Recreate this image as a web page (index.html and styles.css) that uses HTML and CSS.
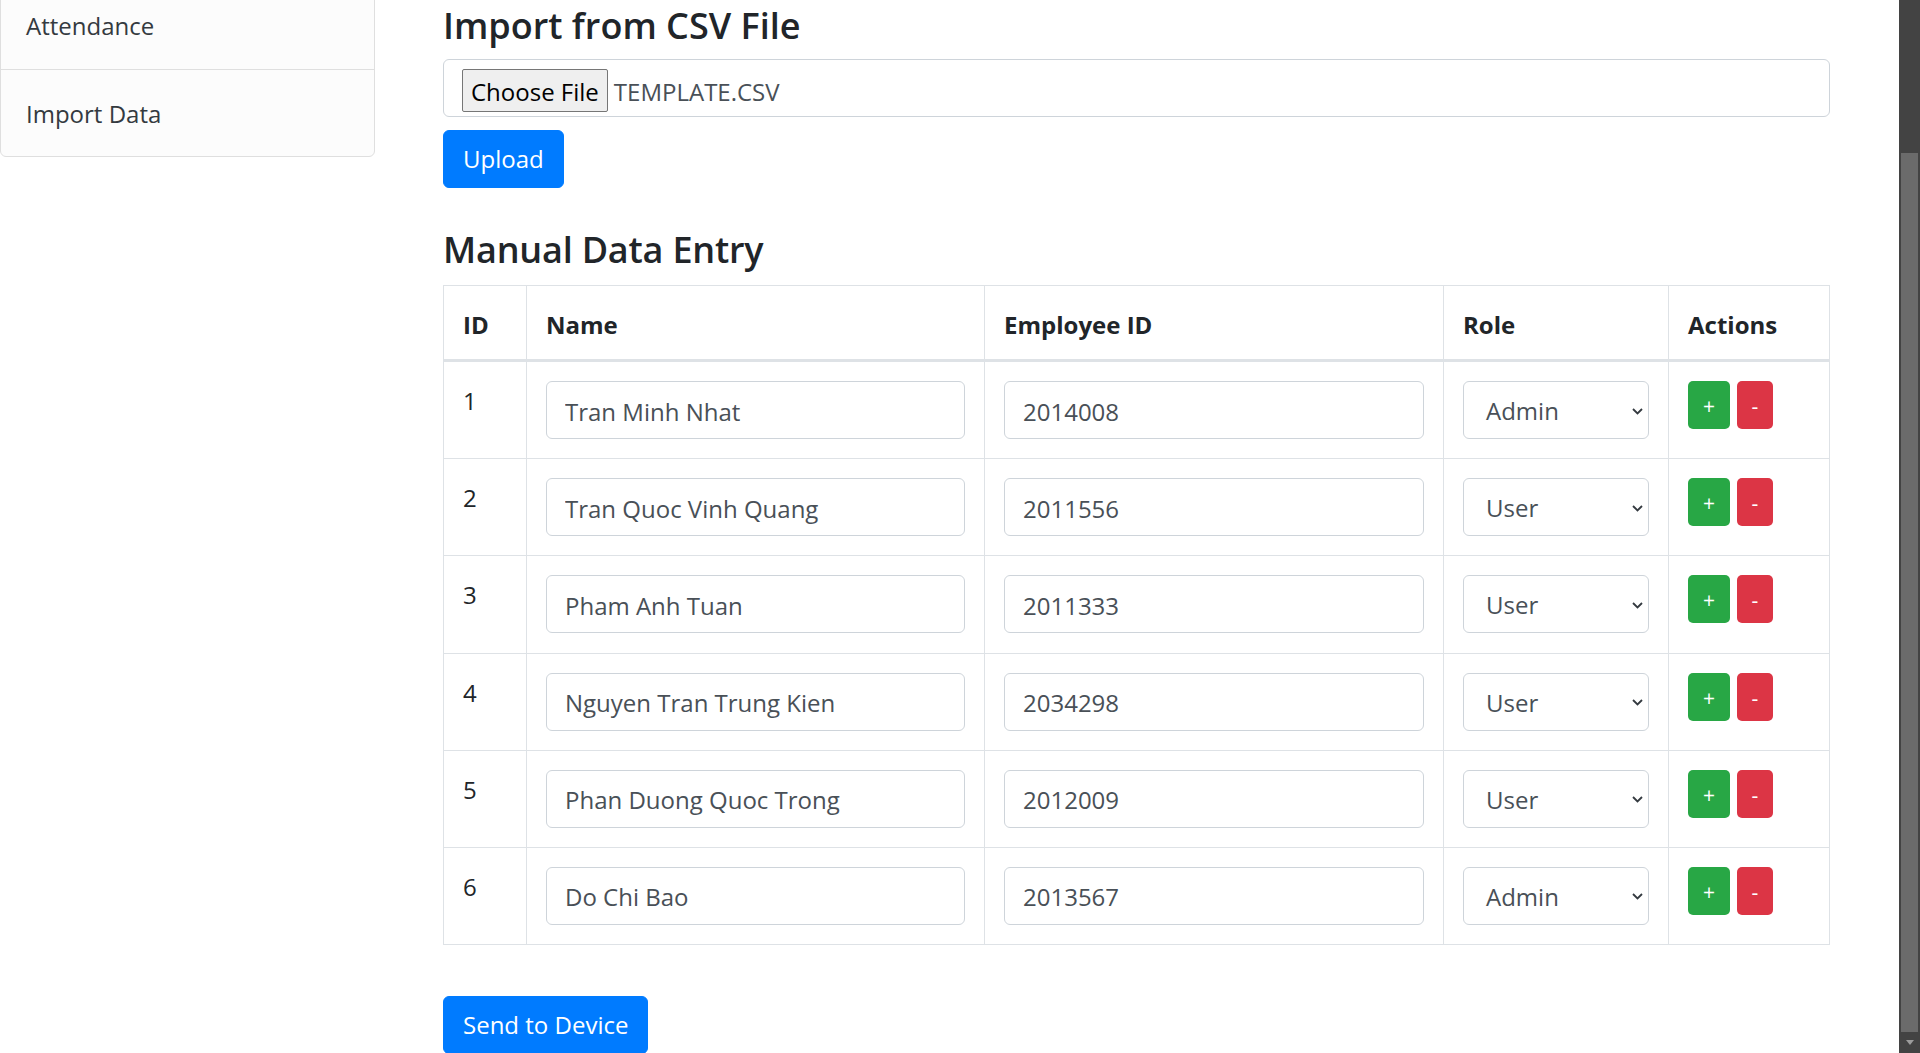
FILE: index.html
```html
<!DOCTYPE html>
<html lang="en">
<head>
<meta charset="utf-8">
<title>Import Data</title>
<link rel="stylesheet" href="styles.css">
</head>
<body>
<div class="window">
  <div class="page">
    <aside class="sidebar">
      <nav class="list-group">
        <a class="list-item" href="#">Attendance</a>
        <a class="list-item" href="#">Import Data</a>
      </nav>
    </aside>
    <main class="main">
      <h4 class="section-title">Import from CSV File</h4>
      <div class="file-box"><span class="file-btn">Choose File</span><span class="file-name">TEMPLATE.CSV</span></div>
      <button class="btn btn-primary" type="button">Upload</button>

      <h4 class="section-title title-manual">Manual Data Entry</h4>
      <table class="data-table">
        <colgroup>
          <col class="col-id"><col class="col-name"><col class="col-emp"><col class="col-role"><col class="col-actions">
        </colgroup>
        <thead>
          <tr><th>ID</th><th>Name</th><th>Employee ID</th><th>Role</th><th>Actions</th></tr>
        </thead>
        <tbody>
          <tr>
            <td class="id-cell">1</td>
            <td><input class="input" type="text" value="Tran Minh Nhat"></td>
            <td><input class="input" type="text" value="2014008"></td>
            <td><div class="select"><span>Admin</span><svg class="chev" width="11" height="7" viewBox="0 0 11 7"><polyline points="1,1 5.5,5.5 10,1" fill="none" stroke="#343a40" stroke-width="1.8"/></svg></div></td>
            <td><div class="actions"><button class="btn-sm btn-add" type="button">+</button><button class="btn-sm btn-remove" type="button">-</button></div></td>
          </tr>
          <tr>
            <td class="id-cell">2</td>
            <td><input class="input" type="text" value="Tran Quoc Vinh Quang"></td>
            <td><input class="input" type="text" value="2011556"></td>
            <td><div class="select"><span>User</span><svg class="chev" width="11" height="7" viewBox="0 0 11 7"><polyline points="1,1 5.5,5.5 10,1" fill="none" stroke="#343a40" stroke-width="1.8"/></svg></div></td>
            <td><div class="actions"><button class="btn-sm btn-add" type="button">+</button><button class="btn-sm btn-remove" type="button">-</button></div></td>
          </tr>
          <tr>
            <td class="id-cell">3</td>
            <td><input class="input" type="text" value="Pham Anh Tuan"></td>
            <td><input class="input" type="text" value="2011333"></td>
            <td><div class="select"><span>User</span><svg class="chev" width="11" height="7" viewBox="0 0 11 7"><polyline points="1,1 5.5,5.5 10,1" fill="none" stroke="#343a40" stroke-width="1.8"/></svg></div></td>
            <td><div class="actions"><button class="btn-sm btn-add" type="button">+</button><button class="btn-sm btn-remove" type="button">-</button></div></td>
          </tr>
          <tr>
            <td class="id-cell">4</td>
            <td><input class="input" type="text" value="Nguyen Tran Trung Kien"></td>
            <td><input class="input" type="text" value="2034298"></td>
            <td><div class="select"><span>User</span><svg class="chev" width="11" height="7" viewBox="0 0 11 7"><polyline points="1,1 5.5,5.5 10,1" fill="none" stroke="#343a40" stroke-width="1.8"/></svg></div></td>
            <td><div class="actions"><button class="btn-sm btn-add" type="button">+</button><button class="btn-sm btn-remove" type="button">-</button></div></td>
          </tr>
          <tr>
            <td class="id-cell">5</td>
            <td><input class="input" type="text" value="Phan Duong Quoc Trong"></td>
            <td><input class="input" type="text" value="2012009"></td>
            <td><div class="select"><span>User</span><svg class="chev" width="11" height="7" viewBox="0 0 11 7"><polyline points="1,1 5.5,5.5 10,1" fill="none" stroke="#343a40" stroke-width="1.8"/></svg></div></td>
            <td><div class="actions"><button class="btn-sm btn-add" type="button">+</button><button class="btn-sm btn-remove" type="button">-</button></div></td>
          </tr>
          <tr>
            <td class="id-cell">6</td>
            <td><input class="input" type="text" value="Do Chi Bao"></td>
            <td><input class="input" type="text" value="2013567"></td>
            <td><div class="select"><span>Admin</span><svg class="chev" width="11" height="7" viewBox="0 0 11 7"><polyline points="1,1 5.5,5.5 10,1" fill="none" stroke="#343a40" stroke-width="1.8"/></svg></div></td>
            <td><div class="actions"><button class="btn-sm btn-add" type="button">+</button><button class="btn-sm btn-remove" type="button">-</button></div></td>
          </tr>
        </tbody>
      </table>

      <button class="btn btn-primary btn-send" type="button">Send to Device</button>
    </main>
  </div>
  <div class="scrollbar"><div class="thumb"></div><div class="arrow-down"></div></div>
</div>
</body>
</html>
```

FILE: styles.css
```css
body {
  margin: 0;
  font-family: "Open Sans", "Noto Sans", sans-serif;
  color: #212529;
  background: #fff;
}

.window {
  display: flex;
  width: 1920px;
  height: 1053px;
  overflow: hidden;
}

.page {
  flex: 1;
  min-width: 0;
  display: flex;
  align-items: flex-start;
}

/* Sidebar */
.sidebar {
  width: 375px;
  flex: none;
}

.list-group {
  display: flex;
  flex-direction: column;
  margin-top: -18px;
  border: 1px solid #dfdfdf;
  border-radius: 0 0 6px 6px;
  background: #fcfcfc;
}

.list-item {
  display: block;
  padding: 25px 25px 25px;
  font-size: 24px;
  line-height: 36px;
  color: #343a40;
  text-decoration: none;
}

.list-item + .list-item {
  border-top: 1px solid #dfdfdf;
  padding: 26px 25px 24px;
}

/* Main */
.main {
  flex: 1;
  padding: 4px 69px 0 68px;
  display: flex;
  flex-direction: column;
  align-items: flex-start;
}

.section-title {
  margin: 0 0 12px;
  font-size: 36px;
  line-height: 43px;
  font-weight: 600;
  color: #212529;
}

.title-manual {
  margin: 40px 0 14px;
  letter-spacing: -0.2px;
}

.file-box {
  align-self: stretch;
  box-sizing: border-box;
  height: 58px;
  border: 1px solid #ced4da;
  border-radius: 6px;
  padding: 9px 18px 0;
  display: flex;
  align-items: flex-start;
  margin-bottom: 13px;
}

.file-btn {
  box-sizing: border-box;
  height: 43px;
  border: 1px solid #767676;
  border-radius: 2px;
  background: #efefef;
  color: #000;
  padding: 0 8px;
  font-size: 24px;
  line-height: 43px;
}

.file-name {
  margin-left: 6px;
  font-size: 24px;
  line-height: 45px;
  color: #495057;
}

.btn {
  font-family: inherit;
  font-size: 24px;
  line-height: 36px;
  padding: 10px 19px;
  border: 1px solid transparent;
  border-radius: 6px;
  color: #fff;
  cursor: pointer;
}

.btn-primary {
  background: #007bff;
  border-color: #007bff;
}

.btn-send {
  margin-top: 51px;
}

/* Table */
.data-table {
  align-self: stretch;
  width: 100%;
  border-collapse: collapse;
  table-layout: fixed;
  font-size: 24px;
  line-height: 36px;
  color: #212529;
}

.col-id { width: 83px; }
.col-name { width: 458px; }
.col-emp { width: 459px; }
.col-role { width: 225px; }

.data-table th,
.data-table td {
  border: 1px solid #dee2e6;
  padding: 19px 19px 19.2px;
  vertical-align: top;
  text-align: left;
}

.data-table th {
  padding: 21px 19px 16px;
  font-weight: 700;
  border-bottom: 3px solid #dee2e6;
}

.data-table td.id-cell {
  line-height: 40px;
}

.input {
  display: block;
  width: 100%;
  box-sizing: border-box;
  height: 58px;
  padding: 11px 18px 9px;
  border: 1px solid #ced4da;
  border-radius: 6px;
  font-family: inherit;
  font-size: 24px;
  line-height: 36px;
  color: #495057;
  background: #fff;
}

.select {
  display: flex;
  align-items: center;
  justify-content: space-between;
  box-sizing: border-box;
  height: 58px;
  border: 1px solid #ced4da;
  border-radius: 6px;
  padding: 2px 5px 0 22px;
  font-size: 24px;
  color: #495057;
  background: #fff;
}

.chev {
  flex: none;
  margin-top: 0;
}

.actions {
  display: flex;
  gap: 7px;
}

.btn-sm {
  width: 42px;
  height: 48px;
  padding: 0;
  border: none;
  border-radius: 5px;
  color: #fff;
  font-family: inherit;
  font-size: 21px;
  line-height: 50px;
  text-align: center;
}

.btn-remove {
  width: 36px;
  background: #dc3545;
}

.btn-add {
  background: #28a745;
}

/* Fake window scrollbar */
.scrollbar {
  width: 21px;
  flex: none;
  box-sizing: border-box;
  background: #434343;
  padding-top: 153px;
  display: flex;
  flex-direction: column;
}

.thumb {
  height: 879px;
  margin: 0 2px;
  background: #6b6b6b;
}

.arrow-down {
  flex: 1;
  display: flex;
  align-items: center;
  justify-content: center;
}

.arrow-down::before {
  content: "";
  border-left: 4.5px solid transparent;
  border-right: 4.5px solid transparent;
  border-top: 5px solid #9c9c9c;
}
```
